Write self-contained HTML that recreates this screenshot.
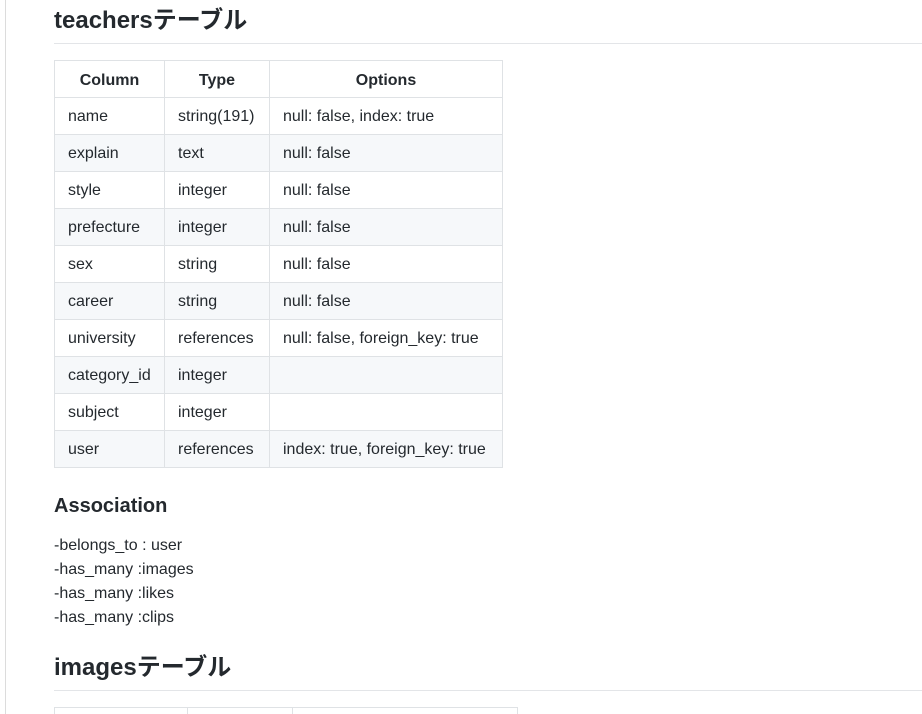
<!DOCTYPE html>
<html><head><meta charset="utf-8"><style>
html,body{margin:0;width:922px;height:714px;overflow:hidden}
body{background:#fff;font-family:"Liberation Sans","Noto Sans CJK JP",sans-serif;color:#24292e;position:relative}
.vl{position:absolute;left:5px;top:0;width:1px;height:714px;background:#dcdcdc}
h2{position:absolute;left:54px;margin:0;font-size:24px;font-weight:bold;line-height:30px}
.hr{position:absolute;left:54px;right:0;height:1px;background:#e3e5e8}
table{position:absolute;left:54px;border-collapse:collapse;font-size:16px}
td,th{border:1px solid #dfe2e5;height:37px;padding:2px 13px 0;box-sizing:border-box;white-space:nowrap}
th{font-weight:bold;text-align:center;padding-top:3px}
tr:nth-child(odd) td{background:#f6f8fa}
tr:first-child th{background:#fff}
h3{position:absolute;left:54px;top:494px;margin:0;font-size:20px;line-height:24px;font-weight:bold}
.list{position:absolute;left:54px;top:534px;font-size:16px;line-height:24px}
</style></head><body>
<div class="vl"></div>
<h2 style="top:6px">teachersテーブル</h2>
<div class="hr" style="top:43px"></div>
<table style="top:60px">
<tr><th style="width:110px">Column</th><th style="width:105px">Type</th><th style="width:233px">Options</th></tr>
<tr><td>name</td><td>string(191)</td><td>null: false, index: true</td></tr>
<tr><td>explain</td><td>text</td><td>null: false</td></tr>
<tr><td>style</td><td>integer</td><td>null: false</td></tr>
<tr><td>prefecture</td><td>integer</td><td>null: false</td></tr>
<tr><td>sex</td><td>string</td><td>null: false</td></tr>
<tr><td>career</td><td>string</td><td>null: false</td></tr>
<tr><td>university</td><td>references</td><td>null: false, foreign_key: true</td></tr>
<tr><td>category_id</td><td>integer</td><td></td></tr>
<tr><td>subject</td><td>integer</td><td></td></tr>
<tr><td>user</td><td>references</td><td>index: true, foreign_key: true</td></tr>
</table>
<h3>Association</h3>
<div class="list">-belongs_to : user<br>-has_many :images<br>-has_many :likes<br>-has_many :clips</div>
<h2 style="top:653px">imagesテーブル</h2>
<div class="hr" style="top:690px"></div>
<table style="top:707px">
<tr><th style="width:133px"></th><th style="width:105px"></th><th style="width:225px"></th></tr>
</table>
</body></html>
